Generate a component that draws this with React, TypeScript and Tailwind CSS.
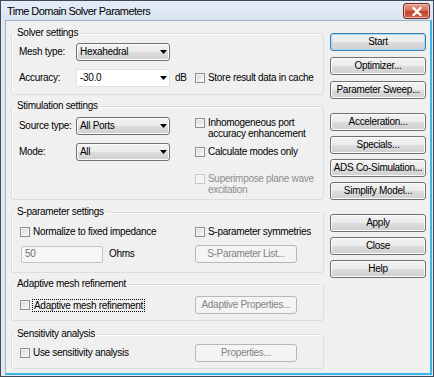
import React from "react";

function Check({ disabled = false }: { disabled?: boolean }) {
  return (
    <span
      className={
        disabled
          ? "inline-block h-[10px] w-[10px] shrink-0 border border-[#c9c9c9] bg-[#f4f4f4]"
          : "inline-block h-[10px] w-[10px] shrink-0 border border-[#8e8f8f] bg-linear-to-br from-[#d4d6da] to-[#fbfbfb] shadow-[inset_0_0_0_1px_#f4f4f4]"
      }
    />
  );
}

function Arrow() {
  return (
    <svg width="7" height="4" viewBox="0 0 7 4" className="mr-[2px] shrink-0">
      <polygon points="0,0 7,0 3.5,4" fill="#000" />
    </svg>
  );
}

function Select({ value }: { value: string }) {
  return (
    <div className="flex h-[18px] w-[94px] items-center justify-between rounded-[3px] border border-[#707070] bg-[linear-gradient(#f2f2f2_0%,#ebebeb_50%,#dddddd_50%,#cfcfcf_100%)] pl-[3px] shadow-[inset_0_0_0_1px_#fcfcfc]">
      <span>{value}</span>
      <Arrow />
    </div>
  );
}

function Btn({
  children,
  primary = false,
  disabled = false,
  w = "w-[96px]",
}: {
  children: React.ReactNode;
  primary?: boolean;
  disabled?: boolean;
  w?: string;
}) {
  const base = "flex h-[18px] shrink-0 items-center justify-center rounded-[3px] border " + w + " ";
  if (disabled)
    return <div className={base + "border-[#b5b8ba] bg-[#f4f4f4] text-[#838383]"}>{children}</div>;
  return (
    <div
      className={
        base +
        (primary
          ? "border-[#3c7fb1] shadow-[inset_0_0_0_1px_#9fdcf7] "
          : "border-[#707070] shadow-[inset_0_0_0_1px_#fcfcfc] ") +
        "bg-[linear-gradient(#f2f2f2_0%,#ebebeb_50%,#dddddd_50%,#cfcfcf_100%)] text-black"
      }
    >
      {children}
    </div>
  );
}

function Group({
  title,
  h,
  mt,
  children,
}: {
  title: string;
  h: string;
  mt: string;
  children: React.ReactNode;
}) {
  return (
    <fieldset
      className={
        "w-[313px] rounded-[3px] border border-[#d5dfe5] shadow-[inset_1px_1px_0_#ffffff] " + h + " " + mt
      }
    >
      <legend className="ml-[3px] px-[2px] leading-[12px]">{title}</legend>
      {children}
    </fieldset>
  );
}

export default function App() {
  return (
    <div className="flex h-[377px] w-[434px] flex-col border border-[#3d4b5c] bg-[#dfe8f3] font-['Liberation_Sans',Arial,sans-serif] text-[10px] leading-[12px] tracking-[-0.3px] text-black">
      {/* title bar */}
      <div className="flex h-[19px] shrink-0 items-start justify-between bg-linear-to-b from-[#e4ecf6] to-[#d9e4f1]">
        <span className="mt-[4px] ml-[6px] text-[11px] leading-[13px] tracking-[-0.55px] text-black">
          Time Domain Solver Parameters
        </span>
        <div className="mt-[2px] mr-[3px] flex h-[16px] w-[27px] items-center justify-center rounded-[3px] border border-[#6b2c2c] bg-[linear-gradient(#e8a093_0%,#d4705e_45%,#c2402c_55%,#cf6a4f_100%)] shadow-[inset_0_0_0_1px_#f0b5a8]">
          <svg width="10" height="9" viewBox="0 0 10 9">
            <path d="M1.5 1 L8.5 8 M8.5 1 L1.5 8" stroke="#ffffff" strokeWidth="2.4" strokeLinecap="round" />
          </svg>
        </div>
      </div>

      {/* client area */}
      <div className="mb-[1px] mr-[1px] ml-[4px] flex min-h-0 flex-1 border-t border-l border-r-2 border-b-2 border-t-[#a2b1c2] border-l-[#a2b1c2] border-r-[#3fb4e6] border-b-[#3fb4e6] bg-[#f0f0f0] pl-[5px]">
        {/* left column */}
        <div className="flex flex-col">
          <Group title="Solver settings" h="h-[68px]" mt="mt-[6px]">
            <div className="mt-[4px] flex h-[18px] items-center pl-[7px]">
              <span className="w-[57px]">Mesh type:</span>
              <Select value="Hexahedral" />
            </div>
            <div className="mt-[8px] flex h-[18px] items-center pl-[7px]">
              <span className="w-[57px]">Accuracy:</span>
              <div className="flex h-[18px] w-[94px] items-center justify-between border border-[#dfe3e8] bg-white pl-[3px]">
                <span>-30.0</span>
                <Arrow />
              </div>
              <span className="ml-[5px] w-[20px]">dB</span>
              <Check />
              <span className="ml-[3px]">Store result data in cache</span>
            </div>
          </Group>

          <Group title="Stimulation settings" h="h-[100px]" mt="mt-[5px]">
            <div className="mt-[5px] flex pl-[7px]">
              <div className="flex w-[176px] flex-col">
                <div className="flex h-[18px] items-center">
                  <span className="w-[57px]">Source type:</span>
                  <Select value="All Ports" />
                </div>
                <div className="mt-[8px] flex h-[18px] items-center">
                  <span className="w-[57px]">Mode:</span>
                  <Select value="All" />
                </div>
              </div>
              <div className="flex flex-col leading-[11px]">
                <div className="flex items-start">
                  <span className="mt-[1px]">
                    <Check />
                  </span>
                  <span className="ml-[3px]">
                    Inhomogeneous port
                    <br />
                    accuracy enhancement
                  </span>
                </div>
                <div className="mt-[7px] flex items-start">
                  <span className="mt-[1px]">
                    <Check />
                  </span>
                  <span className="ml-[3px]">Calculate modes only</span>
                </div>
                <div className="mt-[14px] flex items-start text-[#8d8d8d]">
                  <span className="mt-[1px]">
                    <Check disabled />
                  </span>
                  <span className="ml-[3px]">
                    Superimpose plane wave
                    <br />
                    excitation
                  </span>
                </div>
              </div>
            </div>
          </Group>

          <Group title="S-parameter settings" h="h-[67px]" mt="mt-[6px]">
            <div className="mt-[8px] flex h-[12px] items-center pl-[8px]">
              <div className="flex w-[175px] items-center">
                <Check />
                <span className="ml-[3px]">Normalize to fixed impedance</span>
              </div>
              <Check />
              <span className="ml-[3px]">S-parameter symmetries</span>
            </div>
            <div className="mt-[7px] flex h-[18px] items-center pl-[8px]">
              <div className="flex w-[175px] items-center">
                <div className="ml-[1px] flex h-[17px] w-[82px] items-center rounded-[2px] border border-[#c2c5c8] bg-[#f6f6f6] pl-[3px] text-[#6d6d6d]">
                  50
                </div>
                <span className="ml-[6px]">Ohms</span>
              </div>
              <Btn disabled w="w-[102px]">
                S-Parameter List...
              </Btn>
            </div>
          </Group>

          <Group title="Adaptive mesh refinement" h="h-[43px]" mt="mt-[5px]">
            <div className="mt-[6px] flex h-[18px] items-center pl-[8px]">
              <div className="flex w-[175px] items-center">
                <Check />
                <span className="ml-[2px] border border-dotted border-black px-[1px] leading-[11px]">
                  Adaptive mesh refinement
                </span>
              </div>
              <Btn disabled w="w-[102px]">
                Adaptive Properties...
              </Btn>
            </div>
          </Group>

          <Group title="Sensitivity analysis" h="h-[41px]" mt="mt-[7px]">
            <div className="mt-[4px] flex h-[18px] items-center pl-[8px]">
              <div className="flex w-[175px] items-center">
                <Check />
                <span className="ml-[3px]">Use sensitivity analysis</span>
              </div>
              <Btn disabled w="w-[102px]">
                Properties...
              </Btn>
            </div>
          </Group>
        </div>

        {/* right column */}
        <div className="ml-[6px] flex flex-col pt-[12px]">
          <div className="flex flex-col gap-[6px]">
            <Btn primary>Start</Btn>
            <Btn>Optimizer...</Btn>
            <Btn>Parameter Sweep...</Btn>
          </div>
          <div className="mt-[14px] flex flex-col gap-[5px]">
            <Btn>Acceleration...</Btn>
            <Btn>Specials...</Btn>
            <Btn>ADS Co-Simulation...</Btn>
            <Btn>Simplify Model...</Btn>
          </div>
          <div className="mt-[14px] flex flex-col gap-[5px]">
            <Btn>Apply</Btn>
            <Btn>Close</Btn>
            <Btn>Help</Btn>
          </div>
        </div>
      </div>
    </div>
  );
}
